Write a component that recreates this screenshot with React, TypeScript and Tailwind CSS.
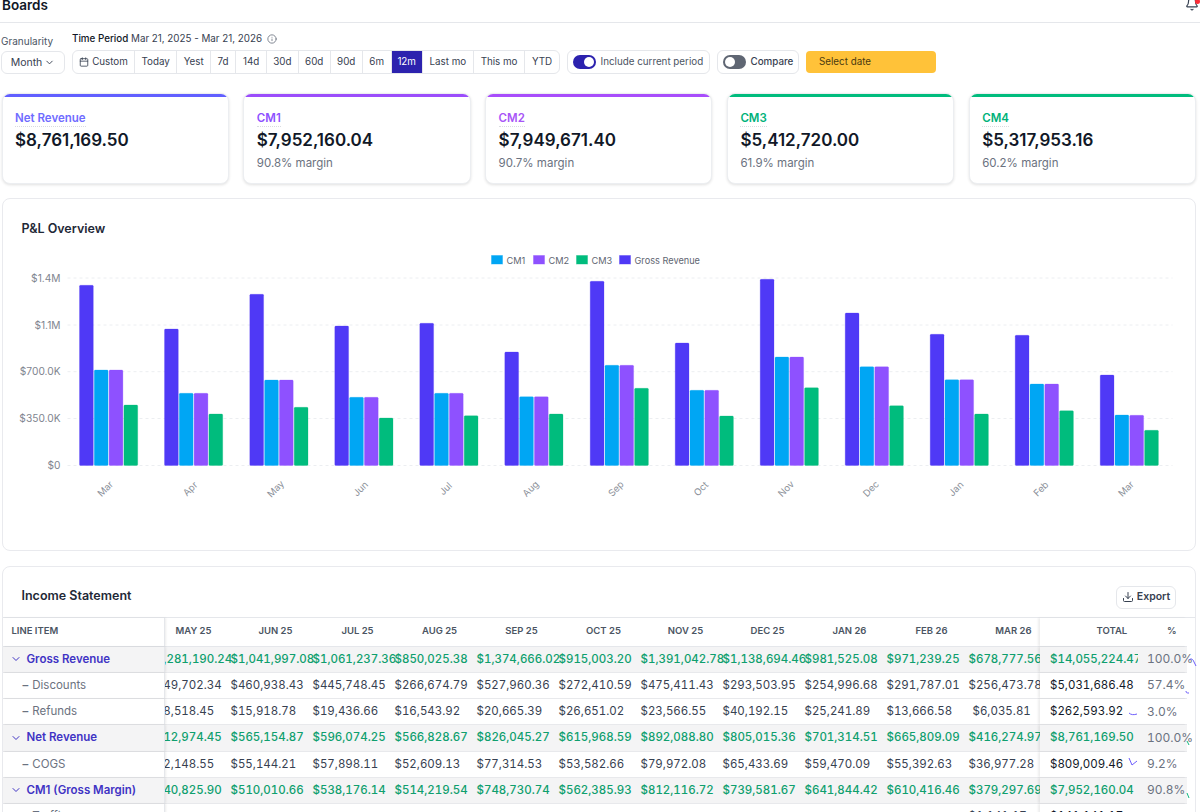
import React from "react";
import { Bell, Calendar, ChevronDown, Download, Info } from "lucide-react";

const periods = [
  { label: "Today", w: "w-[42.5px]" },
  { label: "Yest", w: "w-[33.5px]" },
  { label: "7d", w: "w-[25.5px]" },
  { label: "14d", w: "w-[30.5px]" },
  { label: "30d", w: "w-[32px]" },
  { label: "60d", w: "w-[32px]" },
  { label: "90d", w: "w-[32px]" },
  { label: "6m", w: "w-[29px]" },
  { label: "12m", w: "w-[31px]", active: true },
  { label: "Last mo", w: "w-[51.5px]" },
  { label: "This mo", w: "w-[51px]" },
  { label: "YTD", w: "w-[34px]" },
];

const stats = [
  { label: "Net Revenue", value: "$8,761,169.50", stripe: "bg-[#615fff]", color: "text-[#6f6cff]" },
  { label: "CM1", value: "$7,952,160.04", margin: "90.8% margin", stripe: "bg-[#9b4dfb]", color: "text-[#8e51ff]" },
  { label: "CM2", value: "$7,949,671.40", margin: "90.7% margin", stripe: "bg-[#a84dfb]", color: "text-[#a855f7]" },
  { label: "CM3", value: "$5,412,720.00", margin: "61.9% margin", stripe: "bg-[#00bc7d]", color: "text-[#00b27a]" },
  { label: "CM4", value: "$5,317,953.16", margin: "60.2% margin", stripe: "bg-[#00bc7d]", color: "text-[#00b27a]" },
];

// bar tops in px, baseline is y=465.5
const bars = [
  { x: 79, m: "Mar", g: 285.3, c1: 370, c2: 370, c3: 405 },
  { x: 164, m: "Apr", g: 329, c1: 393.3, c2: 393.3, c3: 414 },
  { x: 249.3, m: "May", g: 294.3, c1: 380, c2: 380, c3: 407.3 },
  { x: 334.3, m: "Jun", g: 326, c1: 397.3, c2: 397.3, c3: 418 },
  { x: 419.3, m: "Jul", g: 323.3, c1: 393.3, c2: 393.3, c3: 415.7 },
  { x: 504.3, m: "Aug", g: 352, c1: 396.7, c2: 396.7, c3: 414 },
  { x: 589.7, m: "Sep", g: 281.3, c1: 365.3, c2: 365.3, c3: 388.3 },
  { x: 674.7, m: "Oct", g: 343, c1: 390.3, c2: 390.3, c3: 416 },
  { x: 759.7, m: "Nov", g: 279.3, c1: 357, c2: 357, c3: 387.7 },
  { x: 844.7, m: "Dec", g: 313, c1: 366.7, c2: 366.7, c3: 405.7 },
  { x: 929.7, m: "Jan", g: 334.3, c1: 379.7, c2: 379.7, c3: 414 },
  { x: 1014.7, m: "Feb", g: 335.3, c1: 384, c2: 384, c3: 410.7 },
  { x: 1099.7, m: "Mar", g: 375, c1: 415, c2: 415.3, c3: 430.3 },
];

const ticks = [
  { y: 278, label: "$1.4M" },
  { y: 325, label: "$1.1M" },
  { y: 371.7, label: "$700.0K" },
  { y: 418.5, label: "$350.0K" },
  { y: 465.5, label: "$0" },
];

const legend = [
  { x: 491, label: "CM1", color: "#00a6f4" },
  { x: 533, label: "CM2", color: "#8e51ff" },
  { x: 576, label: "CM3", color: "#00bc7d" },
  { x: 619, label: "Gross Revenue", color: "#4f39f6" },
];

const months = ["MAY 25", "JUN 25", "JUL 25", "AUG 25", "SEP 25", "OCT 25", "NOV 25", "DEC 25", "JAN 26", "FEB 26", "MAR 26"];

type Row = { label: string; section?: boolean; values: string[]; total: string; pct: string };

const rows: Row[] = [
  {
    label: "Gross Revenue",
    section: true,
    values: ["$1,281,190.24", "$1,041,997.08", "$1,061,237.36", "$850,025.38", "$1,374,666.02", "$915,003.20", "$1,391,042.78", "$1,138,694.46", "$981,525.08", "$971,239.25", "$678,777.56"],
    total: "$14,055,224.47",
    pct: "100.0%",
  },
  {
    label: "Discounts",
    values: ["$549,702.34", "$460,938.43", "$445,748.45", "$266,674.79", "$527,960.36", "$272,410.59", "$475,411.43", "$293,503.95", "$254,996.68", "$291,787.01", "$256,473.78"],
    total: "$5,031,686.48",
    pct: "57.4%",
  },
  {
    label: "Refunds",
    values: ["$18,518.45", "$15,918.78", "$19,436.66", "$16,543.92", "$20,665.39", "$26,651.02", "$23,566.55", "$40,192.15", "$25,241.89", "$13,666.58", "$6,035.81"],
    total: "$262,593.92",
    pct: "3.0%",
  },
  {
    label: "Net Revenue",
    section: true,
    values: ["$612,974.45", "$565,154.87", "$596,074.25", "$566,828.67", "$826,045.27", "$615,968.59", "$892,088.80", "$805,015.36", "$701,314.51", "$665,809.09", "$416,274.97"],
    total: "$8,761,169.50",
    pct: "100.0%",
  },
  {
    label: "COGS",
    values: ["$72,148.55", "$55,144.21", "$57,898.11", "$52,609.13", "$77,314.53", "$53,582.66", "$79,972.08", "$65,433.69", "$59,470.09", "$55,392.63", "$36,977.28"],
    total: "$809,009.46",
    pct: "9.2%",
  },
  {
    label: "CM1 (Gross Margin)",
    section: true,
    values: ["$540,825.90", "$510,010.66", "$538,176.14", "$514,219.54", "$748,730.74", "$562,385.93", "$812,116.72", "$739,581.67", "$641,844.42", "$610,416.46", "$379,297.69"],
    total: "$7,952,160.04",
    pct: "90.8%",
  },
  // only the top pixels of this row are on screen
  {
    label: "Traffic",
    values: ["", "", "", "", "", "", "", "", "", "", "$1,141.17"],
    total: "$141,141.17",
    pct: "1.1%",
  },
];

function Chart() {
  return (
    <svg width="1192" height="270" viewBox="2.5 250 1192 270" className="block">
      {legend.map((l) => (
        <g key={l.label}>
          <rect x={l.x} y={255.5} width={11} height={8.5} fill={l.color} stroke={l.color} strokeOpacity={0.4} />
          <text x={l.x + 15} y={263.5} fontSize={9.2} fill="#5f6672">{l.label}</text>
        </g>
      ))}
      {ticks.map((t) => (
        <g key={t.label}>
          <line x1={67} x2={1172} y1={t.y} y2={t.y} stroke="#eceef1" strokeDasharray="3 3" />
          <text x={60} y={t.y + 3.5} fontSize={10.2} textAnchor="end" fill="#7f8590">{t.label}</text>
        </g>
      ))}
      {bars.map((b) => (
        <g key={b.x}>
          <Bar x={b.x} top={b.g} color="#4f39f6" />
          <Bar x={b.x + 14.8} top={b.c1} color="#00a6f4" />
          <Bar x={b.x + 29.6} top={b.c2} color="#8e51ff" />
          <Bar x={b.x + 44.4} top={b.c3} color="#00bc7d" />
          <text
            x={b.x + 26}
            y={492}
            fontSize={9.5}
            fill="#8b9099"
            textAnchor="middle"
            transform={`rotate(-45 ${b.x + 26} 489)`}
          >
            {b.m}
          </text>
        </g>
      ))}
    </svg>
  );
}

function Bar({ x, top, color }: { x: number; top: number; color: string }) {
  return <rect x={x} y={top} width={13.8} height={465.5 - top} rx={1} fill={color} stroke={color} strokeOpacity={0.25} />;
}

function TableRow({ row }: { row: Row }) {
  const bg = row.section ? "bg-[#f4f4f5]" : "bg-white";
  const valueColor = row.section ? "font-medium text-[#0f9f6e]" : "text-[#374151]";
  return (
    <div className={`flex h-[26.25px] items-center border-b border-[#e8e9ec] text-[11.5px] ${bg}`}>
      <div className={`flex h-full w-[162.5px] shrink-0 items-center border-r border-[#e5e7eb] shadow-[1px_0_2px_rgba(0,0,0,0.08)] ${bg}`}>
        {row.section ? (
          <>
            <ChevronDown size={12} strokeWidth={2} className="ml-[7px] text-[#3f33c4]" />
            <span className="ml-[5px] font-semibold text-[#3f33c4]">{row.label}</span>
          </>
        ) : (
          <span className="ml-[20px] text-[#6b7280]">
            <span className="mr-[4px] font-semibold">–</span>
            {row.label}
          </span>
        )}
      </div>
      <div className="h-full min-w-0 flex-1 overflow-hidden">
        <div className="ml-[-16.5px] flex h-full items-center tabular-nums">
          {row.values.map((v, i) => (
            <div
              key={i}
              className={`w-[82px] shrink-0 whitespace-nowrap ${valueColor} ${v === "$6,035.81" ? "pl-1" : ""}`}
            >
              {v}
            </div>
          ))}
        </div>
      </div>
      <div className={`flex h-full w-[147px] shrink-0 items-center tabular-nums shadow-[-2px_0_2px_rgba(0,0,0,0.07)] ${bg}`}>
        <div className={`w-[98px] shrink-0 overflow-hidden whitespace-nowrap pl-[10.5px] ${row.section ? "font-medium text-[#0f9f6e]" : "text-[#111827]"}`}>
          {row.total}
        </div>
        <div className="shrink-0 whitespace-nowrap pl-[9.5px] text-xs text-[#6b7280]">{row.pct}</div>
      </div>
    </div>
  );
}

export default function App() {
  return (
    <div className="h-[812px] w-[1200px] overflow-hidden bg-white [font-family:Inter,sans-serif] text-[#111827]">
      {/* top bar, scrolled partly out of view */}
      <div className="flex h-[23px] items-start justify-between overflow-hidden border-b border-[#e5e7eb] pl-[2px] pr-[1px]">
        <div className="mt-[-5px] text-[13.5px] font-semibold leading-[20px]">Boards</div>
        <div className="relative mt-[-3px]">
          <Bell size={14} className="text-[#374151]" />
          <span className="absolute right-[-1px] top-[2px] h-[5px] w-[5px] rounded-full bg-red-500" />
        </div>
      </div>

      {/* filters */}
      <div className="flex items-end pl-[1px] pt-[9px]">
        <div className="w-[71px]">
          <div className="mb-[3px] text-[10px] leading-[14px] text-[#4b5563]">Granularity</div>
          <button className="flex h-[23px] w-[64px] items-center justify-center gap-[2px] rounded-md border border-[#e5e7eb] text-[10.5px] text-[#374151]">
            Month <ChevronDown size={11} />
          </button>
        </div>
        <div>
          <div className="mb-[4px] flex items-center gap-[4px] text-[9.8px] leading-[14px]">
            <span><span className="font-medium">Time Period</span> <span className="text-[#374151]">Mar 21, 2025 - Mar 21, 2026</span></span>
            <Info size={10} className="ml-[1px] text-[#6b7280]" />
          </div>
          <div className="flex h-[24px] w-[488px] items-center overflow-hidden rounded-md border border-[#e5e7eb] text-[9.8px] text-[#374151]">
            <div className="flex h-full w-[62px] items-center justify-center gap-[3px] border-r border-[#e5e7eb]">
              <Calendar size={10} /> Custom
            </div>
            {periods.map((p) => (
              <div
                key={p.label}
                className={`flex h-full ${p.w} items-center justify-center border-r border-[#e5e7eb] last:border-r-0 ${p.active ? "bg-[#2c22ae] text-white" : ""}`}
              >
                {p.label}
              </div>
            ))}
          </div>
        </div>
        <div className="ml-[6.5px] flex h-[24px] w-[143px] items-center gap-[5px] rounded-md border border-[#e5e7eb] pl-[5px] text-[9.8px] text-[#4b5563]">
          <span className="flex h-[14px] w-[23px] items-center justify-end rounded-full bg-[#2c22ae] pr-[2px]">
            <span className="h-[10px] w-[10px] rounded-full bg-white" />
          </span>
          Include current period
        </div>
        <div className="ml-[7px] flex h-[24px] w-[82.5px] items-center gap-[5px] rounded-md border border-[#e5e7eb] pl-[5px] text-[9.8px] font-medium text-[#374151]">
          <span className="flex h-[14px] w-[23px] items-center rounded-full bg-[#5f6673] pl-[2px]">
            <span className="h-[10px] w-[10px] rounded-full bg-white" />
          </span>
          Compare
        </div>
        <button className="mb-[1px] ml-[7px] h-[22px] w-[130px] rounded-[4px] bg-[#ffc239] pl-[13px] text-left text-[9.8px] text-[#4b3a10]">
          Select date
        </button>
      </div>

      {/* stat cards */}
      <div className="grid grid-cols-5 gap-[14.5px] pl-[1.5px] pr-[4px] pt-[19px]">
        {stats.map((s) => (
          <div key={s.label} className="h-[90.5px] overflow-hidden rounded-lg border border-[#eceef1] bg-white shadow-[0_1px_3px_rgba(0,0,0,0.12)]">
            <div className={`h-[3px] ${s.stripe}`} />
            <div className="px-[12.5px] pt-[7px]">
              <div className={`inline-block border-b border-dotted border-[#d9dbe0] text-[11.5px] font-semibold leading-[15px] ${s.color}`}>
                {s.label}
              </div>
              <div className="text-[17px] font-semibold leading-[24px] text-[#111827]">{s.value}</div>
              {s.margin && <div className="mt-[3px] text-[11.5px] leading-[16px] text-[#6b7280]">{s.margin}</div>}
            </div>
          </div>
        ))}
      </div>

      {/* chart card */}
      <div className="ml-[1.5px] mr-[4px] mt-[14px] h-[353px] rounded-lg border border-[#e9eaee] bg-white">
        <div className="pl-[19px] pt-[21px] text-[12.5px] font-semibold leading-[18px] text-[#1f2937]">P&amp;L Overview</div>
        <div className="pt-[12px]">
          <Chart />
        </div>
      </div>

      {/* income statement */}
      <div className="ml-[1.5px] mr-[4px] mt-[15px] rounded-t-lg border border-[#e9eaee] bg-white">
        <div className="flex h-[50px] items-end justify-between px-[19px] pb-[8px]">
          <div className="mb-[4px] text-[12.5px] font-semibold leading-[18px] text-[#1f2937]">Income Statement</div>
          <button className="flex h-[23px] w-[60px] items-center justify-center gap-[3px] rounded-md border border-[#e5e7eb] text-[10.5px] font-semibold text-[#374151]">
            <Download size={12} /> Export
          </button>
        </div>
        <div className="relative border-t border-[#e5e7eb]">
          <div className="w-[1184px]">
            <div className="flex h-[29px] items-center border-b border-[#e5e7eb] text-[9.5px] font-semibold text-[#4b5563]">
              <div className="flex h-full w-[162.5px] shrink-0 items-center border-r border-[#e5e7eb] pl-[9px] shadow-[1px_0_2px_rgba(0,0,0,0.08)]">LINE ITEM</div>
              <div className="h-full min-w-0 flex-1 overflow-hidden">
                <div className="ml-[-16.5px] flex h-full items-center">
                  {months.map((m) => (
                    <div key={m} className="w-[82px] shrink-0 pl-2 text-center">{m}</div>
                  ))}
                </div>
              </div>
              <div className="flex h-full w-[147px] shrink-0 items-center shadow-[-2px_0_2px_rgba(0,0,0,0.07)]">
                <div className="w-[88px] shrink-0 pl-[57px]">TOTAL</div>
                <div className="shrink-0 pl-[39.5px]">%</div>
              </div>
            </div>
            {rows.map((r) => (
              <TableRow key={r.label} row={r} />
            ))}
          </div>
          {/* stray sparkline strokes on top of the last columns */}
          <svg className="pointer-events-none absolute left-[-2.5px] top-[-617px] h-[812px] w-[1200px]" viewBox="0 0 1200 812" fill="none">
            <path d="M1189 659c2-2 4-1 5 2l2 4" stroke="#6d5dfc" />
            <path d="M1186 690c0 2 1 2 3 2" stroke="#6d5dfc" />
            <path d="M1129 712c2 2 5 2 8 1" stroke="#6d5dfc" />
            <path d="M1187 740l2 4" stroke="#10b981" />
            <path d="M1129 757l3 7 5-4" stroke="#6d5dfc" />
            <path d="M1187 792l2 5" stroke="#10b981" />
          </svg>
        </div>
      </div>
    </div>
  );
}
